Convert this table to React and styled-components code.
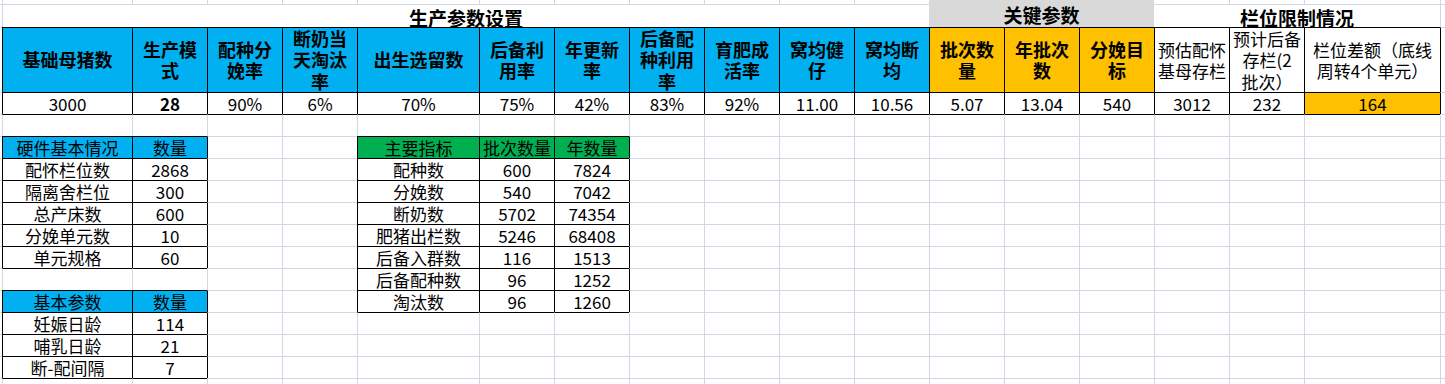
import React from "react"
import styled, { createGlobalStyle } from "styled-components"

const GRID = "#d0d7e5"
const BLUE = "#00b0f0"
const ORANGE = "#ffc000"
const GREEN = "#00b050"
const GRAY = "#d9d9d9"
const ROWS = 17
const COLS = 19

const GlobalStyle = createGlobalStyle`
  html, body {
    margin: 0;
    padding: 0;
    background: #fff;
    overflow: hidden;
  }
  body {
    font-family: "Noto Sans CJK SC", "Noto Sans", sans-serif;
    color: #000;
  }
`

const Sheet = styled.div`
  display: grid;
  grid-template-columns: 2px 130px 75px 75px 75px 122px repeat(11, 75px) 136px 1fr;
  grid-template-rows: 4px 23px 65px repeat(14, 22px);
  width: 1445px;
  height: 384px;
  overflow: hidden;
`

const Cell = styled.div`
  grid-column: ${({ $c }) => $c} / span ${({ $cs }) => $cs};
  grid-row: ${({ $r }) => $r} / span ${({ $rs }) => $rs};
  box-sizing: border-box;
  min-width: 0;
  display: flex;
  flex-direction: column;
  align-items: center;
  justify-content: center;
  background: ${({ $bg }) => $bg || "#fff"};
  border-left: ${({ $bl }) => $bl};
  border-top: ${({ $bt }) => $bt};
  font-size: 17px;
  font-weight: ${({ $bold }) => ($bold ? 700 : 400)};
  text-align: center;
  white-space: nowrap;
`

const TitleCell = styled(Cell)`
  font-size: 19px;
  font-weight: 700;
  padding-top: 2px;
`

const HeadCell = styled(Cell)`
  font-size: 18px;
  font-weight: 700;
`

const NoteCell = styled(Cell)`
  font-size: 17px;
`

const Line = styled.span`
  display: flex;
  align-items: center;
  justify-content: center;
  height: ${({ $h }) => $h}px;
  line-height: ${({ $h }) => $h}px;
`

const kinds = {
  title: { Comp: TitleCell, h: 21 },
  head: { Comp: HeadCell, h: 21.5 },
  note: { Comp: NoteCell, h: 21.5 },
  value: { Comp: Cell, h: 21 },
}

const headers = [
  ["基础母猪数"],
  ["生产模", "式"],
  ["配种分", "娩率"],
  ["断奶当", "天淘汰", "率"],
  ["出生选留数"],
  ["后备利", "用率"],
  ["年更新", "率"],
  ["后备配", "种利用", "率"],
  ["育肥成", "活率"],
  ["窝均健", "仔"],
  ["窝均断", "均"],
  ["批次数", "量"],
  ["年批次", "数"],
  ["分娩目", "标"],
  ["预估配怀", "基母存栏"],
  ["预计后备", "存栏(2", "批次）"],
  ["栏位差额（底线", "周转4个单元）"],
]

const values = [
  "3000", "28", "90%", "6%", "70%", "75%", "42%", "83%", "92%",
  "11.00", "10.56", "5.07", "13.04", "540", "3012", "232", "164",
]

const hardware = [
  ["硬件基本情况", "数量"],
  ["配怀栏位数", "2868"],
  ["隔离舍栏位", "300"],
  ["总产床数", "600"],
  ["分娩单元数", "10"],
  ["单元规格", "60"],
]

const basics = [
  ["基本参数", "数量"],
  ["妊娠日龄", "114"],
  ["哺乳日龄", "21"],
  ["断-配间隔", "7"],
]

const indicators = [
  ["主要指标", "批次数量", "年数量"],
  ["配种数", "600", "7824"],
  ["分娩数", "540", "7042"],
  ["断奶数", "5702", "74354"],
  ["肥猪出栏数", "5246", "68408"],
  ["后备入群数", "116", "1513"],
  ["后备配种数", "96", "1252"],
  ["淘汰数", "96", "1260"],
]

const table = (rows, c0, r0, headBg) =>
  rows.flatMap((row, i) =>
    row.map((text, j) => ({
      c: c0 + j,
      r: r0 + i,
      text,
      boxed: true,
      bg: i === 0 ? headBg : null,
    }))
  )

const buildSpecs = () => [
  { c: 2, r: 2, cs: 11, kind: "title", text: "生产参数设置" },
  { c: 13, r: 1, cs: 3, rs: 2, kind: "title", bg: GRAY, text: "关键参数" },
  { c: 16, r: 2, cs: 3, kind: "title", text: "栏位限制情况" },
  ...headers.map((lines, i) => ({
    c: 2 + i,
    r: 3,
    text: lines,
    boxed: true,
    kind: i >= 14 ? "note" : "head",
    bg: i >= 14 ? null : i >= 11 ? ORANGE : BLUE,
  })),
  ...values.map((text, i) => ({
    c: 2 + i,
    r: 4,
    text,
    boxed: true,
    bold: text === "28",
    bg: i === 16 ? ORANGE : null,
  })),
  ...table(hardware, 2, 6, BLUE),
  ...table(basics, 2, 13, BLUE),
  ...table(indicators, 6, 6, GREEN),
]

// every cell of the visible sheet, with the edge each one draws (left / top)
const layout = () => {
  const specs = buildSpecs().map((s) => ({ cs: 1, rs: 1, kind: "value", ...s }))
  const owner = Array.from({ length: ROWS + 1 }, () => Array(COLS + 1).fill(null))
  specs.forEach((s) => {
    for (let r = s.r; r < s.r + s.rs; r++)
      for (let c = s.c; c < s.c + s.cs; c++) owner[r][c] = s
  })
  for (let r = 1; r <= ROWS; r++)
    for (let c = 1; c <= COLS; c++)
      if (!owner[r][c]) {
        const empty = { c, r, cs: 1, rs: 1, kind: "value", text: "" }
        owner[r][c] = empty
        specs.push(empty)
      }
  const edge = (cell, nb) => {
    if (!nb || nb === cell) return "none"
    if (cell.boxed || nb.boxed) return "1px solid #000"
    if (cell.bg || nb.bg) return "none"
    return `1px solid ${GRID}`
  }
  return specs.map((s) => ({
    ...s,
    bl: s.c === 1 ? "none" : edge(s, owner[s.r][s.c - 1]),
    bt: s.r === 1 ? "none" : edge(s, owner[s.r - 1][s.c]),
  }))
}

const App = () => {
  const cells = layout()
  return (
    <>
      <GlobalStyle />
      <Sheet>
        {cells.map((cell) => {
          const { Comp, h } = kinds[cell.kind]
          const lines = Array.isArray(cell.text) ? cell.text : [cell.text]
          return (
            <Comp
              key={`${cell.r}-${cell.c}`}
              $c={cell.c}
              $r={cell.r}
              $cs={cell.cs}
              $rs={cell.rs}
              $bg={cell.bg}
              $bl={cell.bl}
              $bt={cell.bt}
              $bold={cell.bold}
            >
              {cell.text !== "" &&
                lines.map((line, i) => (
                  <Line key={i} $h={h}>
                    {line}
                  </Line>
                ))}
            </Comp>
          )
        })}
      </Sheet>
    </>
  )
}

export default App
